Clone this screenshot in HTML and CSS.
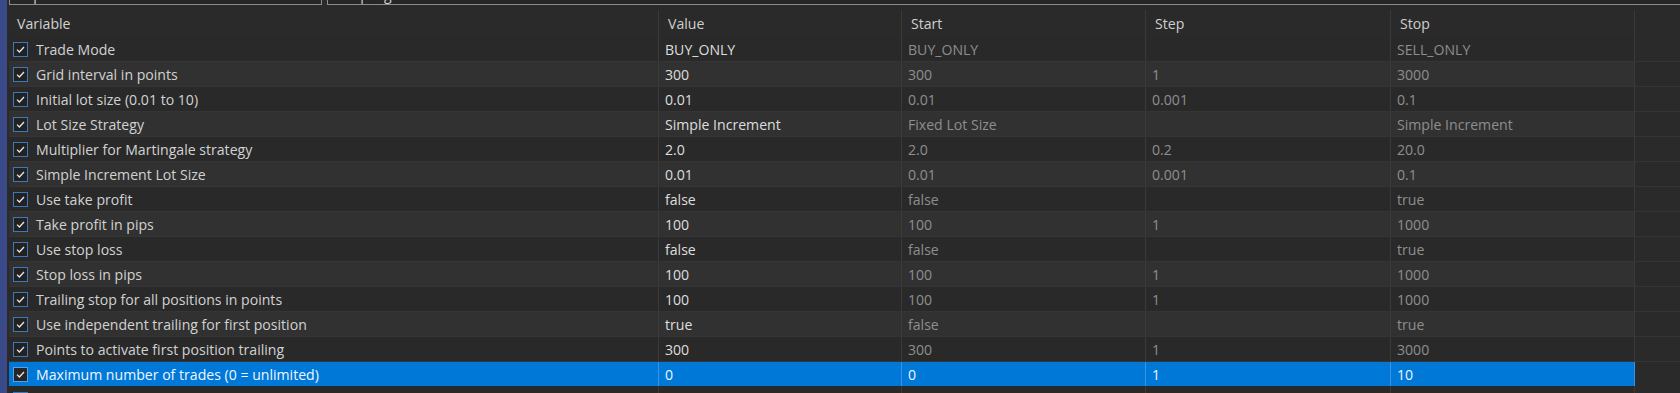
FILE: index.html
```html
<!DOCTYPE html>
<html lang="en">
<head>
    <meta charset="UTF-8">
    <title>Inputs</title>
    <link rel="stylesheet" href="styles.css">
</head>
<body>
<div class="app">
    <div class="rail"></div>
    <div class="main">
        <div class="topbar">
            <div class="field f1">Expert</div>
            <div class="field f2">Simple grid</div>
        </div>
        <div class="grid">
            <div class="row head">
                <div class="cell name">Variable</div>
                <div class="cell">Value</div>
                <div class="cell">Start</div>
                <div class="cell">Step</div>
                <div class="cell">Stop</div>
                <div class="cell end"></div>
            </div>
            <div class="row">
                <div class="cell name"><span class="chk"><svg viewBox="0 0 15 15"><rect x="0.5" y="0.5" width="14" height="14"/><path d="M4 7.6l2.4 2.4 4.6-5"/></svg></span>Trade Mode</div>
                <div class="cell val">BUY_ONLY</div><div class="cell dim">BUY_ONLY</div><div class="cell dim"></div><div class="cell dim">SELL_ONLY</div><div class="cell end"></div>
            </div>
            <div class="row alt">
                <div class="cell name"><span class="chk"><svg viewBox="0 0 15 15"><rect x="0.5" y="0.5" width="14" height="14"/><path d="M4 7.6l2.4 2.4 4.6-5"/></svg></span>Grid interval in points</div>
                <div class="cell val">300</div><div class="cell dim">300</div><div class="cell dim">1</div><div class="cell dim">3000</div><div class="cell end"></div>
            </div>
            <div class="row">
                <div class="cell name"><span class="chk"><svg viewBox="0 0 15 15"><rect x="0.5" y="0.5" width="14" height="14"/><path d="M4 7.6l2.4 2.4 4.6-5"/></svg></span>Initial lot size (0.01 to 10)</div>
                <div class="cell val">0.01</div><div class="cell dim">0.01</div><div class="cell dim">0.001</div><div class="cell dim">0.1</div><div class="cell end"></div>
            </div>
            <div class="row alt">
                <div class="cell name"><span class="chk"><svg viewBox="0 0 15 15"><rect x="0.5" y="0.5" width="14" height="14"/><path d="M4 7.6l2.4 2.4 4.6-5"/></svg></span>Lot Size Strategy</div>
                <div class="cell val">Simple Increment</div><div class="cell dim">Fixed Lot Size</div><div class="cell dim"></div><div class="cell dim">Simple Increment</div><div class="cell end"></div>
            </div>
            <div class="row">
                <div class="cell name"><span class="chk"><svg viewBox="0 0 15 15"><rect x="0.5" y="0.5" width="14" height="14"/><path d="M4 7.6l2.4 2.4 4.6-5"/></svg></span>Multiplier for Martingale strategy</div>
                <div class="cell val">2.0</div><div class="cell dim">2.0</div><div class="cell dim">0.2</div><div class="cell dim">20.0</div><div class="cell end"></div>
            </div>
            <div class="row alt">
                <div class="cell name"><span class="chk"><svg viewBox="0 0 15 15"><rect x="0.5" y="0.5" width="14" height="14"/><path d="M4 7.6l2.4 2.4 4.6-5"/></svg></span>Simple Increment Lot Size</div>
                <div class="cell val">0.01</div><div class="cell dim">0.01</div><div class="cell dim">0.001</div><div class="cell dim">0.1</div><div class="cell end"></div>
            </div>
            <div class="row">
                <div class="cell name"><span class="chk"><svg viewBox="0 0 15 15"><rect x="0.5" y="0.5" width="14" height="14"/><path d="M4 7.6l2.4 2.4 4.6-5"/></svg></span>Use take profit</div>
                <div class="cell val">false</div><div class="cell dim">false</div><div class="cell dim"></div><div class="cell dim">true</div><div class="cell end"></div>
            </div>
            <div class="row alt">
                <div class="cell name"><span class="chk"><svg viewBox="0 0 15 15"><rect x="0.5" y="0.5" width="14" height="14"/><path d="M4 7.6l2.4 2.4 4.6-5"/></svg></span>Take profit in pips</div>
                <div class="cell val">100</div><div class="cell dim">100</div><div class="cell dim">1</div><div class="cell dim">1000</div><div class="cell end"></div>
            </div>
            <div class="row">
                <div class="cell name"><span class="chk"><svg viewBox="0 0 15 15"><rect x="0.5" y="0.5" width="14" height="14"/><path d="M4 7.6l2.4 2.4 4.6-5"/></svg></span>Use stop loss</div>
                <div class="cell val">false</div><div class="cell dim">false</div><div class="cell dim"></div><div class="cell dim">true</div><div class="cell end"></div>
            </div>
            <div class="row alt">
                <div class="cell name"><span class="chk"><svg viewBox="0 0 15 15"><rect x="0.5" y="0.5" width="14" height="14"/><path d="M4 7.6l2.4 2.4 4.6-5"/></svg></span>Stop loss in pips</div>
                <div class="cell val">100</div><div class="cell dim">100</div><div class="cell dim">1</div><div class="cell dim">1000</div><div class="cell end"></div>
            </div>
            <div class="row">
                <div class="cell name"><span class="chk"><svg viewBox="0 0 15 15"><rect x="0.5" y="0.5" width="14" height="14"/><path d="M4 7.6l2.4 2.4 4.6-5"/></svg></span>Trailing stop for all positions in points</div>
                <div class="cell val">100</div><div class="cell dim">100</div><div class="cell dim">1</div><div class="cell dim">1000</div><div class="cell end"></div>
            </div>
            <div class="row alt">
                <div class="cell name"><span class="chk"><svg viewBox="0 0 15 15"><rect x="0.5" y="0.5" width="14" height="14"/><path d="M4 7.6l2.4 2.4 4.6-5"/></svg></span>Use independent trailing for first position</div>
                <div class="cell val">true</div><div class="cell dim">false</div><div class="cell dim"></div><div class="cell dim">true</div><div class="cell end"></div>
            </div>
            <div class="row">
                <div class="cell name"><span class="chk"><svg viewBox="0 0 15 15"><rect x="0.5" y="0.5" width="14" height="14"/><path d="M4 7.6l2.4 2.4 4.6-5"/></svg></span>Points to activate first position trailing</div>
                <div class="cell val">300</div><div class="cell dim">300</div><div class="cell dim">1</div><div class="cell dim">3000</div><div class="cell end"></div>
            </div>
            <div class="row selected">
                <div class="cell name"><span class="chk"><svg viewBox="0 0 15 15"><rect x="0.5" y="0.5" width="14" height="14"/><path d="M4 7.6l2.4 2.4 4.6-5"/></svg></span>Maximum number of trades (0 = unlimited)</div>
                <div class="cell val">0</div><div class="cell dim">0</div><div class="cell dim">1</div><div class="cell dim">10</div><div class="cell end"></div>
            </div>
            <div class="row">
                <div class="cell name"><span class="chk"><svg viewBox="0 0 15 15"><rect x="0.5" y="0.5" width="14" height="14"/><path d="M4 7.6l2.4 2.4 4.6-5"/></svg></span></div>
                <div class="cell val"></div><div class="cell dim"></div><div class="cell dim"></div><div class="cell dim"></div><div class="cell end"></div>
            </div>
        </div>
    </div>
</div>
</body>
</html>
```

FILE: styles.css
```css
body {
    margin: 0;
    background: #2a2a2a;
    font-family: "Open Sans", "Noto Sans", sans-serif;
    font-size: 14.1px;
    color: #d4d4d4;
    overflow: hidden;
    height: 393px;
}
.app { display: flex; height: 393px; }
.rail { width: 7px; background: #3a4987; flex: none; }
.main { flex: 1; padding-left: 2px; min-width: 0; }

.topbar { display: flex; gap: 5px; height: 9px; align-items: flex-end; }
.field {
    height: 24px;
    margin-bottom: 4px;
    box-sizing: border-box;
    border: 1px solid #8c8c8c;
    border-top: none;
    background: #262626;
    color: #cfcfcf;
    padding: 2px 8px 0;
    line-height: 24px;
    align-self: flex-end;
    margin-top: -20px;
}
.f1 { width: 313px; }
.f2 { flex: 1; margin-right: -40px; }

.row {
    display: grid;
    grid-template-columns: 650px 243px 244px 245px 244px 1fr;
    height: 25px;
    box-sizing: border-box;
    border-bottom: 1px solid #353535;
}
.row .cell { background: #292929; }
.row.alt .cell { background: #313131; }
.row .cell.end { background: transparent; }
.cell {
    display: flex;
    align-items: center;
    padding-left: 6px;
    border-right: 1px solid #3a3a3a;
    white-space: nowrap;
    overflow: hidden;
}
.cell.end { border-right: none; }

.head { height: 28px; border-bottom: none; padding-top: 1px; }
.head .cell { background: #2a2a2a; padding-left: 9px; color: #cfcfcf; }
.head .cell.name { padding-left: 8px; }

.cell.name { padding-left: 4px; color: #d2d2d2; }
.val { color: #dedede; }
.dim { color: #8e8e8e; }

.chk { width: 15px; height: 15px; margin-right: 8px; flex: none; }
.chk svg { display: block; width: 15px; height: 15px; }
.chk rect { fill: #222; stroke: #3d77bd; }
.chk path { fill: none; stroke: #e6e6e6; stroke-width: 1.3; }

.row.selected .cell { background: #0078d7; color: #eef6ff; border-right-color: #3b93de; }
.row.selected .cell.end { background: transparent; border-right: none; }
.row.selected { border-bottom-color: #2a2a2a; }
.row.selected .chk rect { fill: #262626; stroke: #5aa0e6; }
```
